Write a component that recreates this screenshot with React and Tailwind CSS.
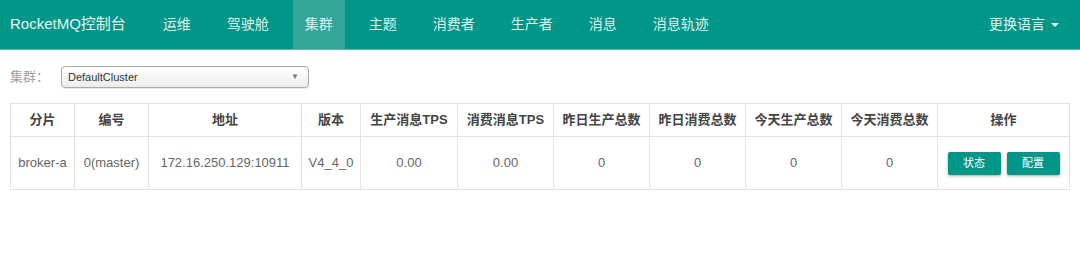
import { useState } from "react";

const navItems = ["运维", "驾驶舱", "集群", "主题", "消费者", "生产者", "消息", "消息轨迹"];

const columns = [
  { title: "分片", w: "w-[64px]" },
  { title: "编号", w: "w-[74px]" },
  { title: "地址", w: "w-[153px]" },
  { title: "版本", w: "w-[59px]" },
  { title: "生产消息TPS", w: "w-[97px]" },
  { title: "消费消息TPS", w: "w-[96px]" },
  { title: "昨日生产总数", w: "w-[96px]" },
  { title: "昨日消费总数", w: "w-[96px]" },
  { title: "今天生产总数", w: "w-[96px]" },
  { title: "今天消费总数", w: "w-[96px]" },
  { title: "操作", w: "w-[132px]" },
];

const brokers = [
  {
    name: "broker-a",
    index: "0(master)",
    addr: "172.16.250.129:10911",
    version: "V4_4_0",
    inTps: "0.00",
    outTps: "0.00",
    yesterdayIn: "0",
    yesterdayOut: "0",
    todayIn: "0",
    todayOut: "0",
  },
];

export default function App() {
  const [active] = useState("集群");

  return (
    <div className="min-h-screen bg-white font-['Liberation_Sans','Noto_Sans_CJK_SC',sans-serif]">
      {/* Navbar */}
      <div className="h-[50px] bg-[#009688] border-b border-[#5fb8ae] flex items-stretch">
        <div className="flex items-center pl-[10px] pr-[25px] text-[15px] text-[#e6f4f2]">
          RocketMQ控制台
        </div>
        <div className="flex items-stretch gap-3">
          {navItems.map((item) => (
            <div
              key={item}
              className={`px-3 flex items-center text-[14px] text-[#dff1ee] ${
                item === active ? "bg-[#33a59a]" : ""
              }`}
            >
              {item}
            </div>
          ))}
        </div>
        <div className="ml-auto flex items-center pr-[21px] text-[14px] text-[#dff1ee]">
          更换语言
          <span className="ml-[6px] border-x-[4px] border-x-transparent border-t-[4px] border-t-[#dff1ee]"></span>
        </div>
      </div>

      {/* Cluster select */}
      <div className="px-[10px] pt-[16px] flex items-center">
        <span className="text-[13px] text-[#a0a0a0] w-[51px]">集群：</span>
        <div className="w-[248px] h-[22px] rounded-[4px] border border-[#a9a9a9] bg-gradient-to-b from-white to-[#ededed] shadow-[0_1px_1px_rgba(0,0,0,0.08)] flex items-center justify-between pl-[6px] pr-[9px]">
          <span className="text-[11px] text-[#333]">DefaultCluster</span>
          <span className="text-[8px] text-[#777]">▼</span>
        </div>
      </div>

      {/* Broker table */}
      <div className="px-[10px] pt-[15px]">
        <table className="table-fixed border-collapse w-[1060px] border border-[#e3e3e3]">
          <thead>
            <tr className="h-[33px]">
              {columns.map((c) => (
                <th
                  key={c.title}
                  className={`${c.w} border border-[#e3e3e3] text-[13px] font-bold text-[#444] text-center p-0`}
                >
                  {c.title}
                </th>
              ))}
            </tr>
          </thead>
          <tbody>
            {brokers.map((b) => (
              <tr key={b.addr} className="h-[53px]">
                {[b.name, b.index, b.addr, b.version, b.inTps, b.outTps, b.yesterdayIn, b.yesterdayOut, b.todayIn, b.todayOut].map(
                  (v, i) => (
                    <td key={i} className="border border-[#e3e3e3] text-[13px] text-[#666] text-center p-0">
                      {v}
                    </td>
                  )
                )}
                <td className="border border-[#e3e3e3] p-0">
                  <div className="flex justify-center gap-[6px]">
                    <button className="w-[53px] h-[23px] rounded-[2px] bg-[#009688] text-white text-[11px] shadow-[0_1px_3px_rgba(0,0,0,0.35)]">
                      状态
                    </button>
                    <button className="w-[53px] h-[23px] rounded-[2px] bg-[#009688] text-white text-[11px] shadow-[0_1px_3px_rgba(0,0,0,0.35)]">
                      配置
                    </button>
                  </div>
                </td>
              </tr>
            ))}
          </tbody>
        </table>
      </div>
    </div>
  );
}
